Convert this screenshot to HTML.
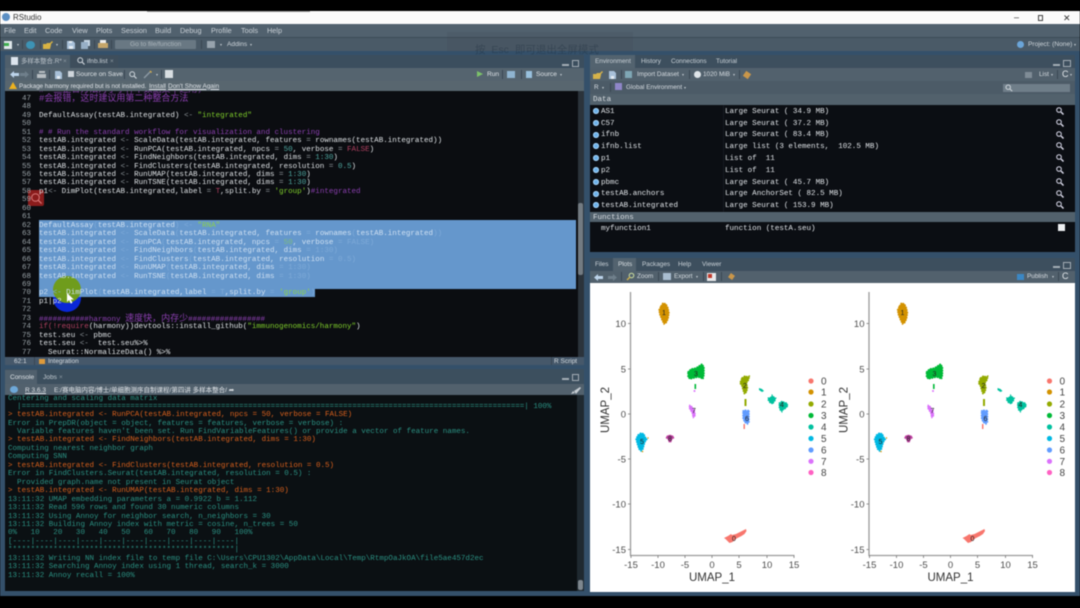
<!DOCTYPE html>
<html><head><meta charset="utf-8"><style>
*{box-sizing:border-box}
html,body{margin:0;padding:0;width:1080px;height:608px;overflow:hidden;background:#000}
#w{position:absolute;left:0;top:0;width:1080px;height:608px;overflow:hidden;filter:blur(.55px);font-family:"Liberation Sans","Noto Sans CJK SC",sans-serif}
.a{position:absolute}
.t{position:absolute;white-space:pre;font-size:7px;line-height:12px;color:#d5dbe0}
.m{font-family:"Liberation Mono","Noto Sans CJK SC",monospace;font-size:7.55px;line-height:8.457px;white-space:pre}
.l{position:absolute;left:0;width:31px;text-align:right;color:#9aa3a8}
.c{position:absolute;left:39px;color:#dfe3e6}
.c i{font-style:normal}
.o{color:#8d9499}.s{color:#7fce2b}.p{color:#8b3fb0}.n{color:#4fa7a0}.k{color:#b04060}
.z{font-size:9px}
.d{color:#7eaad8}.g{color:#8cd14b}.e{color:#cfe0f2}
.q{position:absolute;left:8px;white-space:pre}
.r{color:#d9601c}.u{color:#2b9183}
.row{position:absolute;left:590px;width:485px;height:11.8px;line-height:11.8px;color:#e2e6ea}
.row b{position:absolute;left:11px;top:1.8px;font-weight:normal}.row em{position:absolute;left:135px;top:1.8px;font-style:normal}
.dot{position:absolute;left:3px;top:3px;width:6px;height:6px;border-radius:50%;background:#6cb1ea;box-shadow:inset 0 0 0 1px #a7d3f5}
.row svg{position:absolute;left:466px;top:2px}
.sep{position:absolute;width:1px;height:9px;background:#3a4753}
.cr{position:absolute;width:0;height:0;border-left:1.7px solid transparent;border-right:1.7px solid transparent;border-top:2.2px solid #c4ccd2}
</style></head><body><div id="w">
<div class="a" style="left:0;top:11px;width:1080px;height:13px;background:#fbfbfb"></div>
<div class="a" style="left:147px;top:11px;width:163px;height:1px;background:#999"></div>
<div class="a" style="left:2px;top:13px;width:8px;height:8px;border-radius:50%;background:#5b8fc4"></div>
<div class="t" style="left:13px;top:12px;color:#333;font-size:8px">RStudio</div>
<div class="t" style="left:1014px;top:11px;color:#333;font-size:9px">–</div>
<div class="a" style="left:1038px;top:15px;width:5px;height:6px;border:1px solid #444"></div>
<div class="t" style="left:1063px;top:12px;color:#333;font-size:9px">✕</div>

<div class="a" style="left:0;top:24px;width:1080px;height:572px;background:#34506a"></div>
<div class="a" style="left:0;top:24px;width:1080px;height:13px;background:#51616e"></div>
<div class="a" style="left:0;top:37px;width:1080px;height:14px;background:#4a5a67;border-top:1px solid #3c4b57"></div>
<div class="t" style="left:4px;top:25px;font-size:7.3px;color:#c9d0d6">File</div>
<div class="t" style="left:24px;top:25px;font-size:7.3px;color:#c9d0d6">Edit</div>
<div class="t" style="left:45px;top:25px;font-size:7.3px;color:#c9d0d6">Code</div>
<div class="t" style="left:72px;top:25px;font-size:7.3px;color:#c9d0d6">View</div>
<div class="t" style="left:96px;top:25px;font-size:7.3px;color:#c9d0d6">Plots</div>
<div class="t" style="left:121px;top:25px;font-size:7.3px;color:#c9d0d6">Session</div>
<div class="t" style="left:155px;top:25px;font-size:7.3px;color:#c9d0d6">Build</div>
<div class="t" style="left:180px;top:25px;font-size:7.3px;color:#c9d0d6">Debug</div>
<div class="t" style="left:211px;top:25px;font-size:7.3px;color:#c9d0d6">Profile</div>
<div class="t" style="left:241px;top:25px;font-size:7.3px;color:#c9d0d6">Tools</div>
<div class="t" style="left:267px;top:25px;font-size:7.3px;color:#c9d0d6">Help</div>
<!-- main toolbar icons -->
<div class="a" style="left:4px;top:41px;width:8px;height:8px;background:#dfe7ea"></div><div class="a" style="left:4px;top:43px;width:5px;height:3px;background:#3fae4f"></div>
<div class="cr" style="left:17px;top:44px"></div><div class="sep" style="left:22px;top:40px"></div>
<div class="a" style="left:26px;top:41px;width:9px;height:8px;border-radius:50%;background:#3d93b5"></div>
<div class="sep" style="left:40px;top:40px"></div>
<svg class="a" style="left:43px;top:41px" width="10" height="8"><path d="M0 3h3l1-1h3l2-2 1 1-2 2v1l-1 4H0z" fill="#d7b243"/></svg>
<div class="cr" style="left:56px;top:44px"></div><div class="sep" style="left:62px;top:40px"></div>
<svg class="a" style="left:67px;top:41px" width="8" height="8"><path d="M0 0h6l2 2v6H0z" fill="#a8c0d8"/><path d="M2 0h3v2H2zM2 5h4v3H2z" fill="#e4ecf3"/></svg>
<svg class="a" style="left:81px;top:40px" width="9" height="9"><path d="M3 0h6v6H7V2H3z" fill="#c4d4e2"/><path d="M0 2h7v7H0z" fill="#97afc6"/></svg>
<div class="sep" style="left:94px;top:40px"></div>
<svg class="a" style="left:98px;top:40px" width="10" height="9"><path d="M2 0h6v3H2z" fill="#eee"/><path d="M0 3h10v5H0z" fill="#c5a66a"/></svg>
<div class="sep" style="left:111px;top:40px"></div>
<div class="a" style="left:115px;top:40px;width:81px;height:9px;background:#697883;border-radius:1px"></div>
<div class="t" style="left:130px;top:38.5px;color:#aab4bb;font-size:6.6px">Go to file/function</div>
<div class="sep" style="left:201px;top:40px"></div>
<div class="a" style="left:207px;top:41px;width:8px;height:7px;background:#97a3ad"></div>
<div class="cr" style="left:220px;top:44px"></div>
<div class="t" style="left:227px;top:39px;color:#cdd4d9;font-size:6.6px">Addins</div>
<div class="cr" style="left:250px;top:44px"></div>
<div class="a" style="left:1017px;top:41px;width:7px;height:7px;border-radius:50%;background:#6ba5d8"></div>
<div class="t" style="left:1028px;top:39px;color:#cdd4d9;font-size:6.6px">Project: (None)</div>
<div class="cr" style="left:1074px;top:44px"></div>

<!-- Esc overlay -->
<div class="a" style="left:447px;top:32px;width:186px;height:19px;background:rgba(60,70,80,.15)"></div>
<div class="t" style="left:475px;top:44px;color:rgba(30,45,60,.38);font-size:10.5px;word-spacing:3px">按 Esc 即可退出全屏模式</div>

<!-- Editor pane -->
<div class="a" style="left:5px;top:55px;width:579px;height:310px;background:#3b4e5e"></div>
<div class="a" style="left:5px;top:55px;width:65px;height:13px;background:#4f5f6c"></div>
<div class="a" style="left:71px;top:55px;width:47px;height:13px;background:#3e4e5c"></div>
<div class="a" style="left:11px;top:57px;width:7px;height:8px;background:#dde5ee"></div>
<div class="t" style="left:21px;top:56px;color:#bbc3ca;font-size:6.4px">多样本整合.R*</div>
<div class="t" style="left:63px;top:56px;color:#8d99a2;font-size:6.4px">×</div>
<svg class="a" style="left:77px;top:57px" width="8" height="8"><circle cx="3.2" cy="3.2" r="2.4" fill="none" stroke="#cfd6dc"/><path d="M5 5l2.5 2.5" stroke="#cfd6dc" stroke-width="1.2"/></svg>
<div class="t" style="left:87px;top:56px;color:#ccd3d8;font-size:6.6px">ifnb.list</div>
<div class="t" style="left:110px;top:56px;color:#8d99a2;font-size:6.4px">×</div>
<div class="a" style="left:562px;top:64px;width:7px;height:2px;background:#a4adb5"></div>
<div class="a" style="left:572px;top:60px;width:7px;height:7px;border:1px solid #a4adb5"></div>
<div class="a" style="left:5px;top:68px;width:579px;height:13px;background:#55646f"></div>
<svg class="a" style="left:10px;top:71px" width="9" height="7"><path d="M0 3.5L4 0v2h5v3H4v2z" fill="#bcd3ea"/></svg>
<svg class="a" style="left:20px;top:71px" width="9" height="7"><path d="M9 3.5L5 0v2H0v3h5v2z" fill="#6f7f8b"/></svg>
<div class="sep" style="left:32px;top:70px"></div>
<svg class="a" style="left:37px;top:71px" width="9" height="7"><path d="M2 0h6v2H2zM0 3h9v4H0z" fill="#b7bdc2"/></svg>
<div class="sep" style="left:49px;top:70px"></div>
<svg class="a" style="left:55px;top:71px" width="7" height="8"><path d="M0 0h5l2 2v6H0z" fill="#a8c0d8"/><path d="M2 5h3v3H2z" fill="#e4ecf3"/></svg>
<div class="a" style="left:68px;top:71px;width:6px;height:6px;background:#cfd6dc"></div>
<div class="t" style="left:76px;top:68.5px;color:#dde2e6;font-size:6.6px">Source on Save</div>
<div class="sep" style="left:124px;top:70px"></div>
<svg class="a" style="left:129px;top:71px" width="9" height="8"><circle cx="3.2" cy="3.2" r="2.4" fill="none" stroke="#cfd6dc"/><path d="M5 5l2.5 2.5" stroke="#cfd6dc" stroke-width="1.2"/></svg>
<svg class="a" style="left:143px;top:70px" width="10" height="9"><path d="M1 8l6-6" stroke="#8e9ba5" stroke-width="1.3"/><path d="M7 1l1.5 1.5" stroke="#d8b04a" stroke-width="1.3"/></svg>
<div class="cr" style="left:156px;top:74px"></div>
<div class="sep" style="left:161px;top:70px"></div>
<div class="a" style="left:165px;top:70px;width:8px;height:8px;background:#d8dee2"></div>
<div class="a" style="left:477px;top:71px;width:0;height:0;border-left:6px solid #7cc26a;border-top:3.5px solid transparent;border-bottom:3.5px solid transparent"></div>
<div class="t" style="left:487px;top:68.5px;color:#dde2e6;font-size:6.6px">Run</div>
<div class="sep" style="left:502px;top:70px"></div>
<div class="a" style="left:507px;top:71px;width:8px;height:7px;background:#8fb4d0"></div>
<div class="sep" style="left:521px;top:70px"></div>
<div class="a" style="left:526px;top:71px;width:6px;height:7px;background:#98c0dd"></div>
<div class="t" style="left:536px;top:68.5px;color:#dde2e6;font-size:6.6px">Source</div>
<div class="cr" style="left:560px;top:74px"></div>
<div class="a" style="left:5px;top:81px;width:579px;height:10px;background:#58666f"></div>
<div class="a" style="left:9px;top:82px;width:0;height:0;border-left:4px solid transparent;border-right:4px solid transparent;border-bottom:7px solid #eeb21f"></div>
<div class="t" style="left:19px;top:80.5px;color:#e0e4e8;font-size:6.2px">Package harmony required but is not installed.</div>
<div class="t" style="left:149px;top:80.5px;color:#e0e4e8;font-size:6.5px;text-decoration:underline">Install</div>
<div class="t" style="left:168px;top:80.5px;color:#e0e4e8;font-size:6.5px;text-decoration:underline">Don't Show Again</div>

<!-- Editor body -->
<div class="a" style="left:5px;top:91px;width:573px;height:266px;background:#0b0d11"></div>
<div class="a" style="left:578px;top:91px;width:6px;height:266px;background:#2b333b"></div>
<div class="a" style="left:578px;top:203px;width:5px;height:72px;background:#737b82;border-radius:2px"></div>
<div class="a" style="left:39px;top:220px;width:537px;height:68.5px;background:#6597cc"></div>
<div class="a" style="left:39px;top:288.5px;width:276px;height:8.5px;background:#6597cc"></div>
<div class="a" style="left:28px;top:190px;width:16px;height:16px;background:#8a1c1c;border-radius:2px"></div>
<svg class="a" style="left:28px;top:190px" width="16" height="16"><circle cx="7.5" cy="7.5" r="3.8" fill="none" stroke="#d97a7a" stroke-width="1"/><path d="M10 10l3.5 3.5" stroke="#d97a7a" stroke-width="1.2"/></svg>
<!-- cursor highlight -->
<div class="a" style="left:53px;top:284px;width:28px;height:28px;border-radius:50%;background:#0a27d8;clip-path:inset(13px 0 0 0)"></div>
<div class="a" style="left:53px;top:276px;width:28px;height:27px;border-radius:50%;background:#6f9c1c"></div>
<div id="code" class="a m" style="left:0;top:0;width:578px;height:357px;overflow:hidden">
<div class="a" style="left:0;top:91px;width:578px;height:266px;overflow:hidden">
<div style="position:absolute;left:0;top:-89.06px;width:578px">
<span class="l" style="top:84.5px">46</span><span class="c p z" style="top:84.5px">#一些整合方法对于小样本数据集不适用，</span>
<span class="l" style="top:93px">47</span><span class="c p z" style="top:93px">#会报错，这时建议用第二种整合方法</span>
<span class="l" style="top:101.4px">48</span>
<span class="l" style="top:109.9px">49</span><span class="c" style="top:109.9px">DefaultAssay(testAB.integrated) <i class="o">&lt;-</i> <i class="s">"integrated"</i></span>
<span class="l" style="top:118.3px">50</span>
<span class="l" style="top:126.8px">51</span><span class="c p" style="top:126.8px"># # Run the standard workflow for visualization and clustering</span>
<span class="l" style="top:135.3px">52</span><span class="c" style="top:135.3px">testAB.integrated <i class="o">&lt;-</i> ScaleData(testAB.integrated, features <i class="o">=</i> rownames(testAB.integrated))</span>
<span class="l" style="top:143.7px">53</span><span class="c" style="top:143.7px">testAB.integrated <i class="o">&lt;-</i> RunPCA(testAB.integrated, npcs <i class="o">=</i> <i class="n">50</i>, verbose <i class="o">=</i> <i class="k">FALSE</i>)</span>
<span class="l" style="top:152.2px">54</span><span class="c" style="top:152.2px">testAB.integrated <i class="o">&lt;-</i> FindNeighbors(testAB.integrated, dims <i class="o">=</i> <i class="n">1:30</i>)</span>
<span class="l" style="top:160.6px">55</span><span class="c" style="top:160.6px">testAB.integrated <i class="o">&lt;-</i> FindClusters(testAB.integrated, resolution <i class="o">=</i> <i class="n">0.5</i>)</span>
<span class="l" style="top:169.1px">56</span><span class="c" style="top:169.1px">testAB.integrated <i class="o">&lt;-</i> RunUMAP(testAB.integrated, dims <i class="o">=</i> <i class="n">1:30</i>)</span>
<span class="l" style="top:177.5px">57</span><span class="c" style="top:177.5px">testAB.integrated <i class="o">&lt;-</i> RunTSNE(testAB.integrated, dims <i class="o">=</i> <i class="n">1:30</i>)</span>
<span class="l" style="top:186px">58</span><span class="c" style="top:186px">p1<i class="o">&lt;-</i> DimPlot(testAB.integrated,label <i class="o">=</i> <i class="k">T</i>,split.by <i class="o">=</i> <i class="s">'group'</i>)<i class="p">#integrated</i></span>
<span class="l" style="top:194.5px">59</span>
<span class="l" style="top:202.9px">60</span>
<span class="l" style="top:211.4px">61</span>
<span class="l" style="top:219.8px">62</span><span class="c e" style="top:219.8px">DefaultAssay<i class="d">(</i>testAB.integrated<i class="d">) &lt;-</i> <i class="g">"RNA"</i></span>
<span class="l" style="top:228.3px">63</span><span class="c e" style="top:228.3px">testAB.integrated <i class="d">&lt;-</i> ScaleData<i class="d">(</i>testAB.integrated, features <i class="d">=</i> rownames<i class="d">(</i>testAB.integrated<i class="d">))</i></span>
<span class="l" style="top:236.8px">64</span><span class="c e" style="top:236.8px">testAB.integrated <i class="d">&lt;-</i> RunPCA<i class="d">(</i>testAB.integrated, npcs <i class="d">=</i> <i class="g" style="opacity:.6">50</i>, verbose <i class="d">=</i> <i class="d">FALSE)</i></span>
<span class="l" style="top:245.2px">65</span><span class="c e" style="top:245.2px">testAB.integrated <i class="d">&lt;-</i> FindNeighbors<i class="d">(</i>testAB.integrated, dims <i class="d">= 1:30)</i></span>
<span class="l" style="top:253.7px">66</span><span class="c e" style="top:253.7px">testAB.integrated <i class="d">&lt;-</i> FindClusters<i class="d">(</i>testAB.integrated, resolution <i class="d">= 0.5)</i></span>
<span class="l" style="top:262.1px">67</span><span class="c e" style="top:262.1px">testAB.integrated <i class="d">&lt;-</i> RunUMAP<i class="d">(</i>testAB.integrated, dims <i class="d">= 1:30)</i></span>
<span class="l" style="top:270.6px">68</span><span class="c e" style="top:270.6px">testAB.integrated <i class="d">&lt;-</i> RunTSNE<i class="d">(</i>testAB.integrated, dims <i class="d">= 1:30)</i></span>
<span class="l" style="top:279px">69</span>
<span class="l" style="top:287.5px">70</span>
<span class="l" style="top:296px">71</span><span class="c" style="top:296px">p1|p2</span>
<span class="l" style="top:304.4px">72</span>
<span class="l" style="top:312.9px">73</span><span class="c p" style="top:312.9px">###########harmony <span class="z">速度快，内存少</span>#################</span>
<span class="l" style="top:321.3px">74</span><span class="c" style="top:321.3px"><i class="k">if(!require</i>(harmony))devtools::install_github(<i class="s">"immunogenomics/harmony"</i>)</span>
<span class="l" style="top:329.8px">75</span><span class="c" style="top:329.8px">test.seu <i class="o">&lt;-</i> pbmc</span>
<span class="l" style="top:338.2px">76</span><span class="c" style="top:338.2px">test.seu <i class="o">&lt;-</i>  test.seu%&gt;%</span>
<span class="l" style="top:346.7px">77</span><span class="c" style="top:346.7px">  Seurat::NormalizeData() %&gt;%</span>
</div></div></div>
<div class="c m e" style="top:289.4px;white-space:pre">p2 <i class="d">&lt;-</i> DimPlot<i class="d">(</i>testAB.integrated,label <i class="d">= T</i>,split.by <i class="d">=</i> <i class="g">'group'</i><i class="d">)</i></div>
<svg class="a" style="left:66px;top:293px" width="9" height="12"><path d="M1 0v9l2.2-2 1.6 3.6 1.6-.7-1.6-3.4h3z" fill="#fff"/></svg>

<div class="a" style="left:5px;top:357px;width:579px;height:8px;background:#46586a"></div>
<div class="t" style="left:14px;top:356px;color:#d5dbe0;font-size:6.5px">62:1</div>
<div class="sep" style="left:34px;top:357px;height:8px"></div>
<div class="a" style="left:39px;top:358.5px;width:6px;height:5px;background:#dd9a3b"></div>
<div class="t" style="left:48px;top:356px;color:#d5dbe0;font-size:6.5px">Integration</div>
<div class="sep" style="left:551px;top:357px;height:8px"></div>
<div class="t" style="left:554px;top:356px;color:#d5dbe0;font-size:6.5px">R Script</div>

<!-- Console -->
<div class="a" style="left:5px;top:369px;width:579px;height:26px;background:#3c4f5e"></div>
<div class="a" style="left:5px;top:370px;width:32px;height:14px;background:#50606d"></div>
<div class="t" style="left:10px;top:372px;color:#dde2e6;font-size:6.6px">Console</div>
<div class="t" style="left:43px;top:372px;color:#c4ccd2;font-size:6.6px">Jobs</div>
<div class="t" style="left:59px;top:372px;color:#8d99a2;font-size:6.4px">×</div>
<div class="a" style="left:562px;top:378px;width:7px;height:2px;background:#a4adb5"></div>
<div class="a" style="left:572px;top:374px;width:7px;height:7px;border:1px solid #a4adb5"></div>
<div class="a" style="left:5px;top:384px;width:579px;height:11px;background:#52616d"></div>
<div class="a" style="left:10px;top:386px;width:8px;height:7px;border-radius:50%;background:#6ea8d8"></div>
<div class="t" style="left:25px;top:385px;color:#dfe3e7;font-size:6.5px;text-decoration:underline">R 3.6.3</div>
<div class="t" style="left:54px;top:385px;color:#dfe3e7;font-size:6.5px">E:/赛电脑内容/博士/单细胞测序自制课程/第四讲 多样本整合/ ➦</div>
<svg class="a" style="left:570px;top:386px" width="12" height="9"><path d="M1 8l2-3 2 2zM4 5l6-4 1 1-5 6z" fill="#c5ccd2"/></svg>
<div class="a" style="left:5px;top:395px;width:572px;height:196px;background:#0b1013"></div>
<div class="a" style="left:577px;top:395px;width:7px;height:196px;background:#1f2930"></div>
<div class="a" style="left:578px;top:580px;width:5px;height:10px;background:#7e878e;border-radius:2px"></div>
<div class="a m" style="left:0;top:394.7px;width:577px;height:196px;overflow:hidden">
<span class="q u" style="top:0">Centering and scaling data matrix</span>
<span class="q u" style="top:8px">  |===============================================================================================================| 100%</span>
<span class="q r" style="top:16.4px">&gt; testAB.integrated &lt;- RunPCA(testAB.integrated, npcs = 50, verbose = FALSE)</span>
<span class="q u" style="top:24.9px">Error in PrepDR(object = object, features = features, verbose = verbose) :</span>
<span class="q u" style="top:33.3px">  Variable features haven't been set. Run FindVariableFeatures() or provide a vector of feature names.</span>
<span class="q r" style="top:41.8px">&gt; testAB.integrated &lt;- FindNeighbors(testAB.integrated, dims = 1:30)</span>
<span class="q u" style="top:50.2px">Computing nearest neighbor graph</span>
<span class="q u" style="top:58.7px">Computing SNN</span>
<span class="q r" style="top:67.2px">&gt; testAB.integrated &lt;- FindClusters(testAB.integrated, resolution = 0.5)</span>
<span class="q u" style="top:75.6px">Error in FindClusters.Seurat(testAB.integrated, resolution = 0.5) :</span>
<span class="q u" style="top:84.1px">  Provided graph.name not present in Seurat object</span>
<span class="q r" style="top:92.5px">&gt; testAB.integrated &lt;- RunUMAP(testAB.integrated, dims = 1:30)</span>
<span class="q u" style="top:101px">13:11:32 UMAP embedding parameters a = 0.9922 b = 1.112</span>
<span class="q u" style="top:109.4px">13:11:32 Read 596 rows and found 30 numeric columns</span>
<span class="q u" style="top:117.9px">13:11:32 Using Annoy for neighbor search, n_neighbors = 30</span>
<span class="q u" style="top:126.4px">13:11:32 Building Annoy index with metric = cosine, n_trees = 50</span>
<span class="q u" style="top:134.8px">0%   10   20   30   40   50   60   70   80   90   100%</span>
<span class="q u" style="top:143.3px">[----|----|----|----|----|----|----|----|----|----|</span>
<span class="q u" style="top:151.7px">**************************************************|</span>
<span class="q u" style="top:160.2px">13:11:32 Writing NN index file to temp file C:\Users\CPU1302\AppData\Local\Temp\RtmpOaJkOA\file5ae457d2ec</span>
<span class="q u" style="top:168.6px">13:11:32 Searching Annoy index using 1 thread, search_k = 3000</span>
<span class="q u" style="top:177.1px">13:11:32 Annoy recall = 100%</span>
</div>

<!-- Environment -->
<div class="a" style="left:590px;top:55px;width:485px;height:50px;background:#3d4f5e"></div>
<div class="a" style="left:590px;top:55px;width:45px;height:13px;background:#53636f"></div>
<div class="t" style="left:595px;top:56px;color:#c9d1d7;font-size:6.4px">Environment</div>
<div class="t" style="left:641px;top:56px;color:#c9d1d7;font-size:6.4px">History</div>
<div class="t" style="left:671px;top:56px;color:#c9d1d7;font-size:6.4px">Connections</div>
<div class="t" style="left:716px;top:56px;color:#c9d1d7;font-size:6.4px">Tutorial</div>
<div class="a" style="left:1053px;top:64px;width:7px;height:2px;background:#a4adb5"></div>
<div class="a" style="left:1063px;top:60px;width:8px;height:7px;border:1px solid #a4adb5"></div>
<div class="a" style="left:590px;top:68px;width:485px;height:13px;background:#52616d"></div>
<svg class="a" style="left:593px;top:71px" width="10" height="8"><path d="M0 3h3l1-1h3l2-2 1 1-2 2v1l-1 4H0z" fill="#d6b24a"/></svg>
<svg class="a" style="left:609px;top:71px" width="7" height="8"><path d="M0 0h5l2 2v6H0z" fill="#a8c0d8"/><path d="M2 5h3v3H2z" fill="#e4ecf3"/></svg>
<div class="sep" style="left:621px;top:70px"></div>
<div class="a" style="left:625px;top:71px;width:7px;height:7px;background:#7fa7b5"></div>
<div class="t" style="left:637px;top:68.5px;color:#d5dbe0;font-size:6.4px">Import Dataset</div>
<div class="cr" style="left:682px;top:74px"></div><div class="sep" style="left:689px;top:70px"></div>
<div class="a" style="left:694px;top:71px;width:7px;height:7px;border-radius:50%;background:#dfe5ea"></div>
<div class="t" style="left:703px;top:68.5px;color:#d5dbe0;font-size:6.4px">1020 MiB</div>
<div class="cr" style="left:733px;top:74px"></div><div class="sep" style="left:739px;top:70px"></div>
<div class="a" style="left:744px;top:72px;width:6px;height:6px;background:#c9964a;transform:rotate(35deg)"></div>
<div class="a" style="left:1025px;top:72px;width:7px;height:6px;background:#7f8c96"></div>
<div class="t" style="left:1039px;top:68.5px;color:#d5dbe0;font-size:6.4px">List</div>
<div class="cr" style="left:1051px;top:74px"></div><div class="sep" style="left:1057px;top:70px"></div>
<div class="t" style="left:1062px;top:68px;color:#e2e7eb;font-size:9px">C</div>
<div class="cr" style="left:1070px;top:74px"></div>
<div class="a" style="left:590px;top:81px;width:485px;height:13px;background:#4c5b67"></div>
<div class="t" style="left:594px;top:81.5px;color:#d5dbe0;font-size:6.4px">R</div>
<div class="cr" style="left:602px;top:87px"></div><div class="sep" style="left:610px;top:83px"></div>
<div class="a" style="left:615px;top:83px;width:7px;height:7px;background:#8f86c8"></div>
<div class="t" style="left:626px;top:81.5px;color:#d5dbe0;font-size:6.4px">Global Environment</div>
<div class="cr" style="left:684px;top:87px"></div>
<div class="a" style="left:1003px;top:84px;width:67px;height:8px;background:#6f7e89"></div>
<svg class="a" style="left:1005px;top:84px" width="8" height="8"><circle cx="3.2" cy="3.2" r="2.2" fill="none" stroke="#cfd6dc"/><path d="M5 5l2.2 2.2" stroke="#cfd6dc"/></svg>
<div class="a" style="left:590px;top:94px;width:485px;height:11px;background:#52616c"></div>
<div class="a m" style="left:593px;top:95.5px;color:#d9dee2">Data</div>
<div class="a" style="left:590px;top:105px;width:485px;height:147px;background:#0b0e13"></div>
<div class="a" style="left:723px;top:105px;width:1px;height:107px;background:#151a20"></div>
<div class="m">
<div class="row" style="top:105px"><span class="dot"></span><b>AS1</b><em>Large Seurat ( 34.9 MB)</em><svg width="8" height="8"><circle cx="3" cy="3" r="2.3" fill="none" stroke="#dde" /><path d="M5 5l2.5 2.5" stroke="#dde" stroke-width="1.4"/></svg></div>
<div class="row" style="top:116.8px"><span class="dot"></span><b>C57</b><em>Large Seurat ( 37.2 MB)</em><svg width="8" height="8"><circle cx="3" cy="3" r="2.3" fill="none" stroke="#dde" /><path d="M5 5l2.5 2.5" stroke="#dde" stroke-width="1.4"/></svg></div>
<div class="row" style="top:128.6px"><span class="dot"></span><b>ifnb</b><em>Large Seurat ( 83.4 MB)</em><svg width="8" height="8"><circle cx="3" cy="3" r="2.3" fill="none" stroke="#dde" /><path d="M5 5l2.5 2.5" stroke="#dde" stroke-width="1.4"/></svg></div>
<div class="row" style="top:140.4px"><span class="dot"></span><b>ifnb.list</b><em>Large list (3 elements,  102.5 MB)</em><svg width="8" height="8"><circle cx="3" cy="3" r="2.3" fill="none" stroke="#dde" /><path d="M5 5l2.5 2.5" stroke="#dde" stroke-width="1.4"/></svg></div>
<div class="row" style="top:152.2px"><span class="dot"></span><b>p1</b><em>List of  11</em><svg width="8" height="8"><circle cx="3" cy="3" r="2.3" fill="none" stroke="#dde" /><path d="M5 5l2.5 2.5" stroke="#dde" stroke-width="1.4"/></svg></div>
<div class="row" style="top:164px"><span class="dot"></span><b>p2</b><em>List of  11</em><svg width="8" height="8"><circle cx="3" cy="3" r="2.3" fill="none" stroke="#dde" /><path d="M5 5l2.5 2.5" stroke="#dde" stroke-width="1.4"/></svg></div>
<div class="row" style="top:175.8px"><span class="dot"></span><b>pbmc</b><em>Large Seurat ( 45.7 MB)</em><svg width="8" height="8"><circle cx="3" cy="3" r="2.3" fill="none" stroke="#dde" /><path d="M5 5l2.5 2.5" stroke="#dde" stroke-width="1.4"/></svg></div>
<div class="row" style="top:187.6px"><span class="dot"></span><b>testAB.anchors</b><em>Large AnchorSet ( 82.5 MB)</em><svg width="8" height="8"><circle cx="3" cy="3" r="2.3" fill="none" stroke="#dde" /><path d="M5 5l2.5 2.5" stroke="#dde" stroke-width="1.4"/></svg></div>
<div class="row" style="top:199.4px"><span class="dot"></span><b>testAB.integrated</b><em>Large Seurat ( 153.9 MB)</em><svg width="8" height="8"><circle cx="3" cy="3" r="2.3" fill="none" stroke="#dde" /><path d="M5 5l2.5 2.5" stroke="#dde" stroke-width="1.4"/></svg></div>
<div class="a" style="left:590px;top:212px;width:485px;height:10px;background:#52616c"></div>
<div class="a" style="left:593px;top:214px;color:#d9dee2">Functions</div>
<div class="row" style="top:222px"><b>myfunction1</b><em>function (testA.seu)</em></div>
</div>
<div class="a" style="left:1058px;top:224px;width:7px;height:7px;background:#eef0f2"></div>

<!-- Plots pane -->
<div class="a" style="left:590px;top:258px;width:485px;height:25px;background:#3d4f5e"></div>
<div class="a" style="left:613px;top:258px;width:23px;height:13px;background:#53636f"></div>
<div class="t" style="left:595px;top:259px;color:#c9d1d7;font-size:6.4px">Files</div>
<div class="t" style="left:618px;top:259px;color:#d9dfe3;font-size:6.4px">Plots</div>
<div class="t" style="left:642px;top:259px;color:#c9d1d7;font-size:6.4px">Packages</div>
<div class="t" style="left:678px;top:259px;color:#c9d1d7;font-size:6.4px">Help</div>
<div class="t" style="left:702px;top:259px;color:#c9d1d7;font-size:6.4px">Viewer</div>
<div class="a" style="left:1053px;top:266px;width:7px;height:2px;background:#a4adb5"></div>
<div class="a" style="left:1063px;top:262px;width:8px;height:7px;border:1px solid #a4adb5"></div>
<div class="a" style="left:590px;top:271px;width:485px;height:12px;background:#52616d"></div>
<svg class="a" style="left:594px;top:274px" width="9" height="7"><path d="M0 3.5L4 0v2h5v3H4v2z" fill="#bcd3ea"/></svg>
<svg class="a" style="left:608px;top:274px" width="9" height="7"><path d="M9 3.5L5 0v2H0v3h5v2z" fill="#6f7f8b"/></svg>
<div class="sep" style="left:621px;top:272px"></div>
<svg class="a" style="left:626px;top:272px" width="9" height="9"><circle cx="5.5" cy="3.5" r="2.3" fill="none" stroke="#cfe0a0"/><path d="M4 5L1 8" stroke="#cfb04a" stroke-width="1.3"/></svg>
<div class="t" style="left:637px;top:271px;color:#d5dbe0;font-size:6.4px">Zoom</div>
<div class="sep" style="left:658px;top:272px"></div>
<div class="a" style="left:663px;top:273px;width:8px;height:7px;background:#a9bdd0"></div>
<div class="t" style="left:674px;top:271px;color:#d5dbe0;font-size:6.4px">Export</div>
<div class="cr" style="left:696px;top:276px"></div><div class="sep" style="left:703px;top:272px"></div>
<div class="a" style="left:707px;top:273px;width:9px;height:8px;background:#e8e8ea"></div><div class="a" style="left:708px;top:274px;width:4px;height:4px;background:#c0392b"></div>
<div class="sep" style="left:721px;top:272px"></div>
<div class="a" style="left:729px;top:274px;width:5px;height:5px;background:#c9964a;transform:rotate(35deg)"></div>
<div class="a" style="left:1017px;top:274px;width:7px;height:6px;background:#3b87c4"></div>
<div class="t" style="left:1027px;top:271px;color:#d5dbe0;font-size:6.4px">Publish</div>
<div class="cr" style="left:1052px;top:276px"></div><div class="sep" style="left:1058px;top:272px"></div>
<div class="t" style="left:1062px;top:270px;color:#e2e7eb;font-size:9px">C</div>
<div class="a" style="left:590px;top:283px;width:485px;height:309px;background:#fff"></div>

<svg class="a" style="left:0;top:0" width="1080" height="608" font-family="Liberation Sans,sans-serif">
<defs><g id="sc" stroke-linecap="round" stroke-width="1.5">
<path d="M661 306l2-3 3 1 2 4 1 5-1 6-2 4-2 1-2-4-2-5-1-5z" fill="#D39200" stroke="#D39200" stroke-dasharray=".6 2"/>
<path d="M688 372l3-3 5-1 3-2 3-2 2 3v8l-1 4-2-1-3-1-4 1-4 1-2-2z" fill="#00BA38" stroke="#00BA38" stroke-dasharray=".6 2"/>
<rect x="694.5" y="384" width="1.6" height="5" fill="#00BA38" stroke="none"/><circle cx="694.5" cy="391" r="1" fill="#DB72FB" stroke="none"/>
<path d="M689.5 405l2 1 3 4 1 5-1 2-1.5 1-1-5-3-5z" fill="#DB72FB" stroke="#DB72FB" stroke-width="1" stroke-dasharray=".6 2"/>
<path d="M742 378l3-2 3 1 1.500-1-1 4-2 3 1 5-1 4-2 2-1.500-4-1-4-2-3z" fill="#93AA00" stroke="#93AA00" stroke-dasharray=".6 2"/>
<rect x="744.5" y="399" width="2" height="7" fill="#93AA00" stroke="none"/>
<path d="M743 411l2-1 2 1 2-1 0 6 0 6-1.500 2-3-2-1.500-4z" fill="#619CFF" stroke="#619CFF" stroke-dasharray=".6 2"/>
<rect x="743.5" y="424" width="1.4" height="5" fill="#F8766D" stroke="none"/>
<path d="M759 388l3 1 2 2-2 1-3-2z" fill="#00C19F" stroke="none"/>
<path d="M768 398l3-1 1-2 2 2 2 1-1 3-1 1-1 2-3-1-2-3z" fill="#00C19F" stroke="#00C19F" stroke-width="1" stroke-dasharray=".6 2"/>
<path d="M779 403l3-2 2 1 3 1 1 3-3 3-2 1-1 2-2-2-1-3z" fill="#00C19F" stroke="#00C19F" stroke-width="1" stroke-dasharray=".6 2"/>
<path d="M638 435l3-2 3 1 1 3 2 2-2 3-1 3-1 4-2 2-2-2-1-3-1-3-1-4z" fill="#00B9E3" stroke="#00B9E3" stroke-dasharray=".6 2"/>
<circle cx="648" cy="438" r=".7" fill="#D39200" stroke="none"/><circle cx="642.5" cy="451.500" r=".8" fill="#D39200" stroke="none"/>
<path d="M667 436l3-1 3 1 1 2-2 1-1 3h-2l-1-3-2-1z" fill="#B23E9A" stroke="#C94BA8" stroke-width=".7"/>
<path d="M724 538l4-2 3-2 1 1 4-1 4-2 6-3 .5 2-2 3-3 2-4 2-3 2-2 2-3 1-2-2-2-2z" fill="#F8766D" stroke="none"/>
</g></defs>
<g id="p1">
<use href="#sc"/>
<path d="M630.5 292V555.5H794.5" fill="none" stroke="#9a9a9a" stroke-width="1.3"/>
<path d="M628 323.5h2.5M628 369h2.5M628 414h2.5M628 459h2.5M628 504h2.5M628 549.5h2.5M631 555.5v2.5M658 555.5v2.5M685 555.5v2.5M712 555.5v2.5M739 555.5v2.5M767 555.5v2.5M794 555.5v2.5" stroke="#777" stroke-width=".8"/>
</g>
<use href="#p1" x="238.5"/>
<g font-size="7" fill="#222" text-anchor="middle">
<text x="664" y="315">1</text><text x="696" y="376">3</text><text x="745" y="388">2</text><text x="747" y="421">6</text><text x="782" y="407">4</text><text x="642" y="444">5</text><text x="670" y="441">8</text><text x="694" y="413">7</text><text x="734" y="541">0</text>
<text x="902.5" y="315">1</text><text x="934.5" y="376">3</text><text x="983.5" y="388">2</text><text x="985.5" y="421">6</text><text x="1020.5" y="407">4</text><text x="880.5" y="444">5</text><text x="908.5" y="441">8</text><text x="932.5" y="413">7</text><text x="972.5" y="541">0</text>
</g>
<g font-size="9.5" fill="#4d4d4d" text-anchor="end">
<text x="626" y="327">10</text><text x="626" y="372.5">5</text><text x="626" y="417.5">0</text><text x="626" y="462.5">-5</text><text x="626" y="507.5">-10</text><text x="626" y="553">-15</text>
<text x="864.5" y="327">10</text><text x="864.5" y="372.5">5</text><text x="864.5" y="417.5">0</text><text x="864.5" y="462.5">-5</text><text x="864.5" y="507.5">-10</text><text x="864.5" y="553">-15</text>
</g>
<g font-size="9.5" fill="#4d4d4d" text-anchor="middle">
<text x="631" y="568">-15</text><text x="658" y="568">-10</text><text x="685" y="568">-5</text><text x="712" y="568">0</text><text x="739" y="568">5</text><text x="767" y="568">10</text><text x="794" y="568">15</text>
<text x="869.5" y="568">-15</text><text x="896.5" y="568">-10</text><text x="923.5" y="568">-5</text><text x="950.5" y="568">0</text><text x="977.5" y="568">5</text><text x="1005.5" y="568">10</text><text x="1032.5" y="568">15</text>
</g>
<g font-size="11.5" fill="#333" text-anchor="middle">
<text x="712" y="581">UMAP_1</text><text x="950.5" y="581">UMAP_1</text>
<text transform="translate(609,410) rotate(-90)">UMAP_2</text><text transform="translate(847.5,410) rotate(-90)">UMAP_2</text>
</g>
<g id="lg"><circle cx="811" cy="381" r="2.6" fill="#F8766D"/><circle cx="811" cy="392" r="2.6" fill="#D39200"/><circle cx="811" cy="404" r="2.6" fill="#93AA00"/><circle cx="811" cy="415.5" r="2.6" fill="#00BA38"/><circle cx="811" cy="427" r="2.6" fill="#00C19F"/><circle cx="811" cy="438.5" r="2.6" fill="#00B9E3"/><circle cx="811" cy="450" r="2.6" fill="#619CFF"/><circle cx="811" cy="461.3" r="2.6" fill="#DB72FB"/><circle cx="811" cy="472.5" r="2.6" fill="#FF61C3"/></g>
<use href="#lg" x="238.5"/>
<g font-size="10" fill="#444">
<text x="821" y="384.5">0</text><text x="821" y="395.5">1</text><text x="821" y="407.5">2</text><text x="821" y="419">3</text><text x="821" y="430.5">4</text><text x="821" y="442">5</text><text x="821" y="453.5">6</text><text x="821" y="465">7</text><text x="821" y="476">8</text>
<text x="1059.5" y="384.5">0</text><text x="1059.5" y="395.5">1</text><text x="1059.5" y="407.5">2</text><text x="1059.5" y="419">3</text><text x="1059.5" y="430.5">4</text><text x="1059.5" y="442">5</text><text x="1059.5" y="453.5">6</text><text x="1059.5" y="465">7</text><text x="1059.5" y="476">8</text>
</g>
</svg>
</div></body></html>
